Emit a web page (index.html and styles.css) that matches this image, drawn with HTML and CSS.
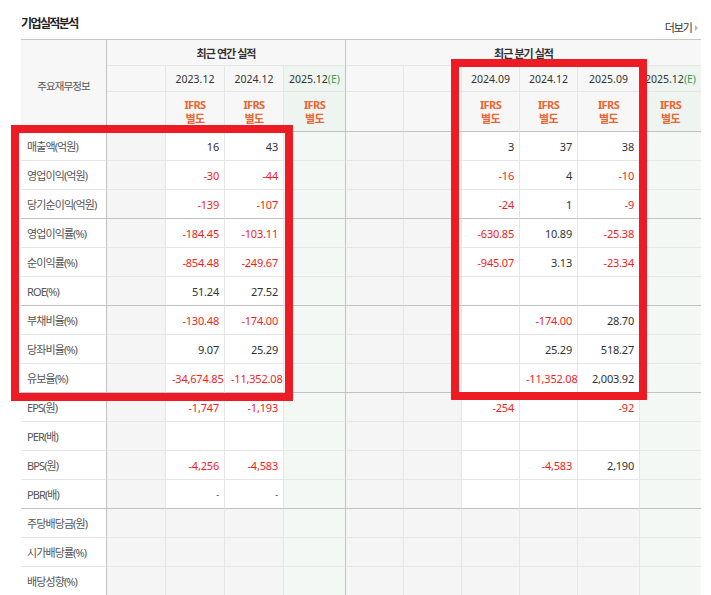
FILE: index.html
```html
<!DOCTYPE html>
<html lang="ko">
<head>
<meta charset="utf-8">
<title>기업실적분석</title>
<link rel="stylesheet" href="styles.css">
</head>
<body>
<div class="page">
  <div class="head">
    <h3 class="title">기업실적분석</h3>
    <a class="more">더보기</a>
  </div>
  <table class="fin">
    <colgroup>
      <col class="w-lbl"><col class="w59"><col class="w59"><col class="w59"><col class="w62">
      <col class="w58"><col class="w58"><col class="w58"><col class="w58"><col class="w62"><col class="w61">
    </colgroup>
    <thead>
      <tr class="h1">
        <th rowspan="3" class="corner">주요재무정보</th>
        <th colspan="4" class="grp vr">최근 연간 실적</th>
        <th colspan="6" class="grp">최근 분기 실적</th>
      </tr>
      <tr class="h2">
        <th></th><th>2023.12</th><th>2024.12</th><th class="est vr">2025.12<span class="e">(E)</span></th>
        <th></th><th></th><th>2024.09</th><th>2024.12</th><th>2025.09</th><th class="est">2025.12<span class="e">(E)</span></th>
      </tr>
      <tr class="h3">
        <th></th>
        <th class="ifrs">IFRS<br>별도</th><th class="ifrs">IFRS<br>별도</th><th class="ifrs est vr">IFRS<br>별도</th>
        <th></th><th></th>
        <th class="ifrs">IFRS<br>별도</th><th class="ifrs">IFRS<br>별도</th><th class="ifrs">IFRS<br>별도</th><th class="ifrs est">IFRS<br>별도</th>
      </tr>
    </thead>
    <tbody>
      <tr><th>매출액(억원)</th><td></td><td>16</td><td>43</td><td></td><td></td><td></td><td>3</td><td>37</td><td>38</td><td></td></tr>
      <tr><th>영업이익(억원)</th><td></td><td class="n">-30</td><td class="n">-44</td><td></td><td></td><td></td><td class="n">-16</td><td>4</td><td class="n">-10</td><td></td></tr>
      <tr class="sep"><th>당기순이익(억원)</th><td></td><td class="n">-139</td><td class="n">-107</td><td></td><td></td><td></td><td class="n">-24</td><td>1</td><td class="n">-9</td><td></td></tr>
      <tr><th>영업이익률(%)</th><td></td><td class="n">-184.45</td><td class="n">-103.11</td><td></td><td></td><td></td><td class="n">-630.85</td><td>10.89</td><td class="n">-25.38</td><td></td></tr>
      <tr><th>순이익률(%)</th><td></td><td class="n">-854.48</td><td class="n">-249.67</td><td></td><td></td><td></td><td class="n">-945.07</td><td>3.13</td><td class="n">-23.34</td><td></td></tr>
      <tr class="sep"><th>ROE(%)</th><td></td><td>51.24</td><td>27.52</td><td></td><td></td><td></td><td></td><td></td><td></td><td></td></tr>
      <tr><th>부채비율(%)</th><td></td><td class="n">-130.48</td><td class="n">-174.00</td><td></td><td></td><td></td><td></td><td class="n">-174.00</td><td>28.70</td><td></td></tr>
      <tr><th>당좌비율(%)</th><td></td><td>9.07</td><td>25.29</td><td></td><td></td><td></td><td></td><td>25.29</td><td>518.27</td><td></td></tr>
      <tr class="sep"><th>유보율(%)</th><td></td><td class="n">-34,674.85</td><td class="n">-11,352.08</td><td></td><td></td><td></td><td></td><td class="n">-11,352.08</td><td>2,003.92</td><td></td></tr>
      <tr><th>EPS(원)</th><td></td><td class="n">-1,747</td><td class="n">-1,193</td><td></td><td></td><td></td><td class="n">-254</td><td></td><td class="n">-92</td><td></td></tr>
      <tr><th>PER(배)</th><td></td><td></td><td></td><td></td><td></td><td></td><td></td><td></td><td></td><td></td></tr>
      <tr><th>BPS(원)</th><td></td><td class="n">-4,256</td><td class="n">-4,583</td><td></td><td></td><td></td><td></td><td class="n">-4,583</td><td>2,190</td><td></td></tr>
      <tr class="sep"><th>PBR(배)</th><td></td><td class="dash">-</td><td class="dash">-</td><td></td><td></td><td></td><td></td><td></td><td></td><td></td></tr>
      <tr class="dv"><th>주당배당금(원)</th><td></td><td></td><td></td><td></td><td></td><td></td><td></td><td></td><td></td><td></td></tr>
      <tr class="dv"><th>시가배당률(%)</th><td></td><td></td><td></td><td></td><td></td><td></td><td></td><td></td><td></td><td></td></tr>
      <tr class="dv"><th>배당성향(%)</th><td></td><td></td><td></td><td></td><td></td><td></td><td></td><td></td><td></td><td></td></tr>
    </tbody>
  </table>
  <div class="mark mark-annual"></div>
  <div class="mark mark-quarter"></div>
</div>
</body>
</html>
```

FILE: styles.css
```css
html, body {
  margin: 0;
  padding: 0;
  background: #fff;
}

body {
  font-family: "Noto Sans", "Noto Sans CJK KR", sans-serif;
  color: #333;
}

.page {
  position: relative;
  width: 711px;
  height: 595px;
  overflow: hidden;
}

.head {
  display: flex;
  justify-content: space-between;
  align-items: flex-start;
  height: 39px;
  padding: 0 13px 0 21px;
  box-sizing: border-box;
}

.title {
  margin: 15px 0 0;
  font-family: "Noto Sans CJK KR", sans-serif;
  font-size: 12px;
  font-weight: 700;
  line-height: 16px;
  letter-spacing: -1.6px;
  color: #222;
}

.more {
  margin-top: 20px;
  display: flex;
  align-items: center;
  gap: 3px;
  font-family: "Noto Sans CJK KR", sans-serif;
  font-size: 11px;
  line-height: 15px;
  letter-spacing: -1px;
  color: #333;
}

.more::after {
  content: "";
  width: 0;
  height: 0;
  border-left: 3px solid #b5b5b5;
  border-top: 3px solid transparent;
  border-bottom: 3px solid transparent;
}

/* table */
.fin {
  margin-left: 21px;
  width: 680px;
  table-layout: fixed;
  border-collapse: separate;
  border-spacing: 0;
  border-top: 1px solid #c6c6c6;
  font-size: 11px;
  color: #333;
}

.w-lbl { width: 86px; }
.w59 { width: 59px; }
.w58 { width: 58px; }
.w61 { width: 61px; }
.w62 { width: 62px; }

.fin th,
.fin td {
  box-sizing: border-box;
  padding: 0 5px 0 6px;
  height: 29px;
  border-right: 1px solid #e6e6e6;
  border-bottom: 1px solid #e6e6e6;
  white-space: nowrap;
  overflow: hidden;
  font-weight: 400;
  text-align: right;
  background: #fff;
}

.fin td {
  letter-spacing: -0.2px;
}

.fin tr > :last-child {
  border-right: 0;
}

/* header */
.fin thead th {
  background: #f7f7f7;
  text-align: center;
  padding: 0;
  font-size: 10.5px;
}

.fin .h1 th { height: 26px; }
.fin .h2 th { height: 26px; }
.fin .h3 th {
  height: 40px;
  border-bottom-color: #c2c2c2;
}

.fin thead .corner {
  border-right-color: #c2c2c2;
  border-bottom-color: #c2c2c2;
  font-family: "Noto Sans CJK KR", sans-serif;
  font-size: 10.5px;
  letter-spacing: -0.9px;
  color: #555;
}

.fin thead .grp {
  font-family: "Noto Sans CJK KR", sans-serif;
  font-weight: 700;
  font-size: 11px;
  letter-spacing: -1px;
  color: #333;
}

.fin .vr {
  border-right-color: #c2c2c2;
}

.fin thead .est {
  background: #eef4ef;
}

.e {
  color: #3f9b55;
}

.fin thead .ifrs {
  font-family: "Noto Sans", "Noto Sans CJK KR", sans-serif;
  font-weight: 700;
  font-size: 11px;
  line-height: 14px;
  letter-spacing: -0.6px;
  color: #ea6530;
}

/* body */
.fin tbody th {
  text-align: left;
  font-size: 11px;
  letter-spacing: -0.9px;
  color: #555;
  border-right-color: #c2c2c2;
}

.fin tbody td:nth-child(2),
.fin tbody td:nth-child(6),
.fin tbody td:nth-child(7) {
  background: #f5f5f5;
}

.fin tbody td:nth-child(5) {
  background: #f4f8f5;
  border-right-color: #c2c2c2;
}

.fin tbody td:nth-child(11) {
  background: #f4f8f5;
}

.fin tbody .sep th,
.fin tbody .sep td {
  border-bottom-color: #c2c2c2;
}

.fin tbody .dv td {
  background: #f5f5f5;
}

.fin tbody .dv td:nth-child(5),
.fin tbody .dv td:nth-child(11) {
  background: #f4f8f5;
}

.fin td.n {
  color: #f21d1d;
}

.fin td.dash {
  color: #333;
  font-size: 9px;
}

/* highlight boxes */
.mark {
  position: absolute;
  box-sizing: border-box;
  border: 8px solid #ed1c24;
  pointer-events: none;
}

.mark-annual {
  left: 11px;
  top: 125px;
  width: 282px;
  height: 276px;
}

.mark-quarter {
  left: 451px;
  top: 59px;
  width: 196px;
  height: 341px;
}
```
